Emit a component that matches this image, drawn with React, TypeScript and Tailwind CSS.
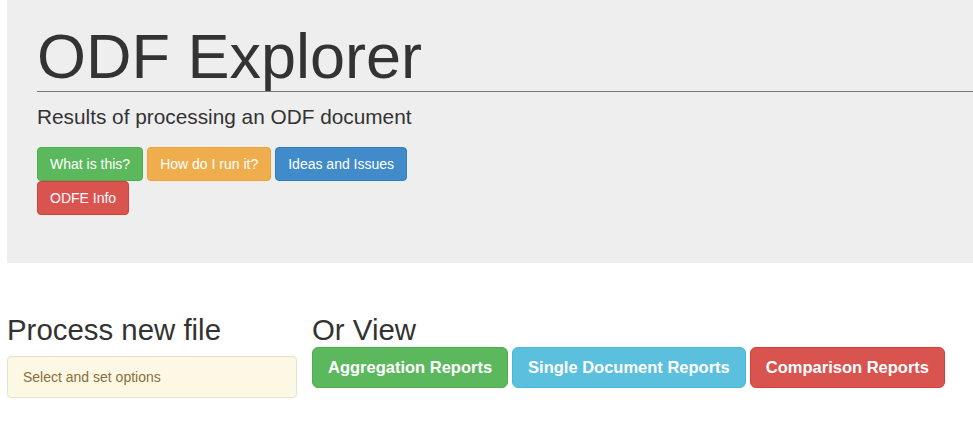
const topButtons = [
  { label: "What is this?", cls: "bg-[#5cb85c] border-[#4cae4c]" },
  { label: "How do I run it?", cls: "bg-[#f0ad4e] border-[#eea236]" },
  { label: "Ideas and Issues", cls: "bg-[#428bca] border-[#357ebd]" },
  { label: "ODFE Info", cls: "bg-[#d9534f] border-[#d43f3a]" },
];

const reportButtons = [
  { label: "Aggregation Reports", cls: "bg-[#5cb85c] border-[#4cae4c]" },
  { label: "Single Document Reports", cls: "bg-[#5bc0de] border-[#46b8da]" },
  { label: "Comparison Reports", cls: "bg-[#d9534f] border-[#d43f3a]" },
];

export default function App() {
  return (
    <div className="min-h-screen bg-white text-[#333] font-['Liberation_Sans',Arial,sans-serif]">
      {/* JUMBOTRON */}
      <section className="ml-[7px] h-[263px] bg-[#eeeeee] pl-[30px] pt-[25px]">
        <h1 className="border-b border-[#777] pb-[3px] text-[63px] leading-[63px] font-normal">
          ODF Explorer
        </h1>
        <p className="mt-[10px] text-[20.8px] leading-[30px]">
          Results of processing an ODF document
        </p>

        <div className="mt-[15px] flex w-[440px] flex-wrap gap-x-1">
          {topButtons.map((b) => (
            <button
              key={b.label}
              className={`h-[34px] rounded-[4px] border px-3 text-[14px] leading-5 text-white ${b.cls}`}
            >
              {b.label}
            </button>
          ))}
        </div>
      </section>

      {/* PROCESS / VIEW */}
      <section className="mt-[50px] flex px-[7px]">
        <div className="w-[290px]">
          <h2 className="text-[29.4px] leading-[33px] font-normal">Process new file</h2>
          <div className="mt-[10px] rounded-[4px] border border-[#e6e1d0] bg-[#fcf8e3] px-[15px] py-[10px] text-[14px] leading-5 text-[#8a6d3b]">
            Select and set options
          </div>
        </div>

        <div className="ml-[15px]">
          <h2 className="text-[29.4px] leading-[33px] font-normal">Or View</h2>
          <div className="mt-px flex gap-x-1">
            {reportButtons.map((b) => (
              <button
                key={b.label}
                className={`flex h-[41px] items-center rounded-[6px] border px-[15px] text-[16.5px] font-bold text-white ${b.cls}`}
              >
                {b.label}
              </button>
            ))}
          </div>
        </div>
      </section>
    </div>
  );
}
